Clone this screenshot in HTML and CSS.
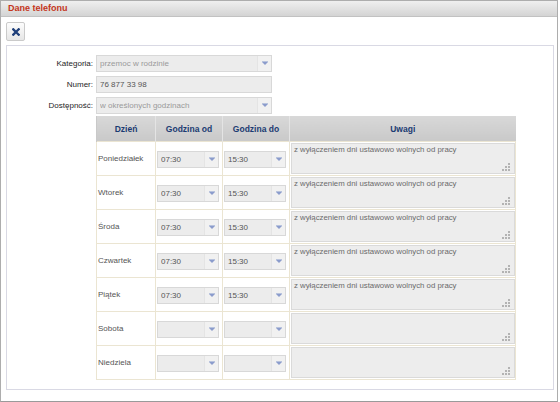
FILE: index.html
```html
<!DOCTYPE html>
<html lang="pl">
<head>
    <meta charset="UTF-8">
    <title>Dane telefonu</title>
    <link rel="stylesheet" href="styles.css">
</head>
<body>
    <div class="panel">
        <div class="panel-head">Dane telefonu</div>
        <div class="toolbar">
            <button class="btn-close" title="Zamknij">
                <svg width="8" height="8" viewBox="0 0 8 8"><path d="M1.3 1.3 L6.7 6.7 M6.7 1.3 L1.3 6.7" stroke="#1f3f7a" stroke-width="2.3" stroke-linecap="square"/></svg>
            </button>
        </div>
        <div class="box">
            <div class="form">
                <label>Kategoria:</label>
                <div class="combo"><input class="muted" value="przemoc w rodzinie" readonly><span class="trigger"></span></div>
                <label>Numer:</label>
                <div class="combo"><input value="76 877 33 98" readonly></div>
                <label>Dostępność:</label>
                <div class="combo"><input class="muted" value="w określonych godzinach" readonly><span class="trigger"></span></div>
            </div>

            <table class="hours">
                <thead>
                    <tr>
                        <th class="c-day">Dzień</th>
                        <th class="c-time">Godzina od</th>
                        <th class="c-time">Godzina do</th>
                        <th>Uwagi</th>
                    </tr>
                </thead>
                <tbody id="rows"></tbody>
            </table>
        </div>
    </div>

    <script>
        const days = [
            ["Poniedziałek", "07:30", "15:30", "z wyłączeniem dni ustawowo wolnych od pracy"],
            ["Wtorek", "07:30", "15:30", "z wyłączeniem dni ustawowo wolnych od pracy"],
            ["Środa", "07:30", "15:30", "z wyłączeniem dni ustawowo wolnych od pracy"],
            ["Czwartek", "07:30", "15:30", "z wyłączeniem dni ustawowo wolnych od pracy"],
            ["Piątek", "07:30", "15:30", "z wyłączeniem dni ustawowo wolnych od pracy"],
            ["Sobota", "", "", ""],
            ["Niedziela", "", "", ""]
        ];
        const grip = '<svg class="grip" width="8" height="8" viewBox="0 0 8 8">'
            + '<rect x="6" y="0" width="2" height="2"/><rect x="3" y="3" width="2" height="2"/><rect x="6" y="3" width="2" height="2"/>'
            + '<rect x="0" y="6" width="2" height="2"/><rect x="3" y="6" width="2" height="2"/><rect x="6" y="6" width="2" height="2"/></svg>';
        const tbody = document.getElementById("rows");
        days.forEach(function(d) {
            const tr = document.createElement("tr");
            tr.innerHTML =
                '<td class="day">' + d[0] + '</td>' +
                '<td><div class="combo small"><input value="' + d[1] + '" readonly><span class="trigger"></span></div></td>' +
                '<td><div class="combo small"><input value="' + d[2] + '" readonly><span class="trigger"></span></div></td>' +
                '<td><div class="note"><textarea readonly>' + d[3] + '</textarea>' + grip + '</div></td>';
            tbody.appendChild(tr);
        });
    </script>
</body>
</html>
```

FILE: styles.css
```css
body {
    margin: 0;
    font-family: "Liberation Sans", Arial, sans-serif;
    font-size: 8px;
    color: #222;
    background: #fff;
}
.panel {
    width: 558px;
    height: 402px;
    box-sizing: border-box;
    border: 1px solid #adadad;
    border-bottom-color: #9a9a9a;
    background: #fff;
}
.panel-head {
    height: 15px;
    line-height: 15px;
    padding-left: 7px;
    background: linear-gradient(#efefef, #d4d4d4);
    border-bottom: 1px solid #c2c2c2;
    color: #c4351c;
    font-size: 9px;
    font-weight: bold;
}
.toolbar {
    padding: 5px 5px 4px;
}
.btn-close {
    width: 19px;
    height: 19px;
    padding: 0;
    display: flex;
    align-items: center;
    justify-content: center;
    background: linear-gradient(#fdfdfd, #e6e6e6);
    border: 1px solid #cacaca;
    border-radius: 2px;
    cursor: pointer;
}
.box {
    width: 548px;
    height: 345px;
    box-sizing: border-box;
    margin-left: 5px;
    border: 1px solid #d9d9e4;
    padding-top: 9px;
}
.form {
    display: grid;
    grid-template-columns: 86px 176px;
    column-gap: 3px;
    row-gap: 4px;
    align-items: center;
}
.form label {
    text-align: right;
    color: #1e1e1e;
}
/* combo / text fields */
.combo {
    display: flex;
    height: 17px;
    box-sizing: border-box;
    border: 1px solid #d8d8d8;
    background: #ececec;
}
.combo input {
    flex: 1;
    min-width: 0;
    border: none;
    background: transparent;
    padding: 0 3px;
    font-family: inherit;
    font-size: 8px;
    color: #555;
    outline: none;
}
.combo input.muted {
    color: #9a9a9a;
}
.trigger {
    width: 13px;
    border-left: 1px solid #e4e4e4;
    background: #f1f1f1;
    position: relative;
}
.trigger::after {
    content: "";
    position: absolute;
    left: 4px;
    top: 6px;
    border-top: 3px solid #8b9ccc;
    border-left: 3px solid transparent;
    border-right: 3px solid transparent;
    width: 0;
    height: 0;
}
.trigger::before {
    content: "";
    position: absolute;
    left: 4px;
    top: 5px;
    width: 6px;
    height: 1px;
    background: #b8c3dd;
}
/* schedule table */
.hours {
    margin: 2px 0 0 89px;
    width: 420px;
    border-collapse: collapse;
    table-layout: fixed;
}
.hours th {
    height: 25px;
    padding: 0;
    background: linear-gradient(#d8d8d8, #c9c9c9);
    color: #1b3b72;
    font-size: 8.5px;
    font-weight: bold;
    border-left: 1px solid #e4e4e4;
}
.hours th:first-child {
    border-left: 1px solid #c9c9c9;
}
.c-day { width: 58px; }
.c-time { width: 66px; }
.hours td {
    height: 33px;
    padding: 0 1px;
    border: 1px solid #ebe5d2;
    vertical-align: middle;
}
.hours td.day {
    color: #555;
    padding-left: 1px;
}
.combo.small {
    width: 62px;
    margin: 2px 0 0 0;
}
.note {
    position: relative;
    height: 31px;
}
.note textarea {
    width: 224px;
    height: 31px;
    box-sizing: border-box;
    margin: 0;
    padding: 1px 2px;
    border: 1px solid #dadada;
    background: #ededed;
    font-family: inherit;
    font-size: 7.8px;
    color: #6a6a6a;
    resize: none;
    display: block;
}
.grip {
    position: absolute;
    right: 4px;
    bottom: 3px;
    fill: #b3b3b3;
}
```
